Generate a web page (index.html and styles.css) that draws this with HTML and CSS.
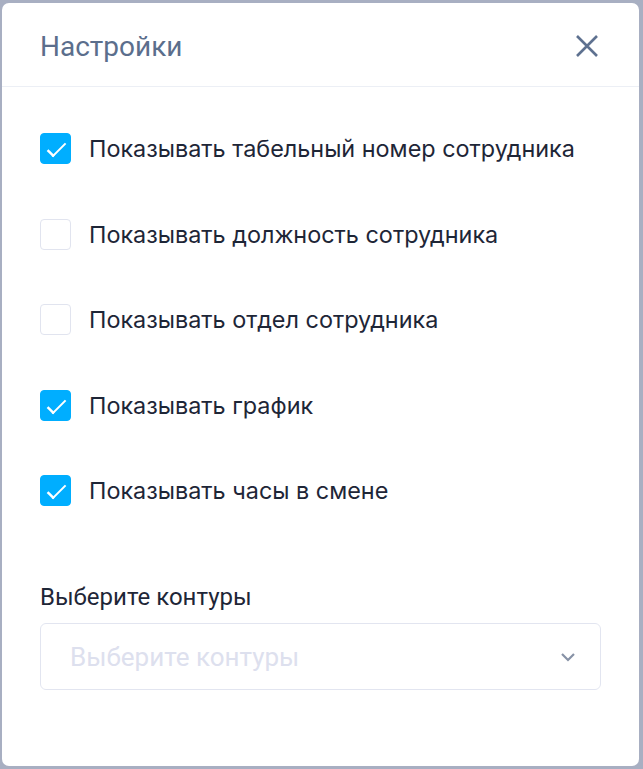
FILE: index.html
```html
<!doctype html>
<html lang="ru">
<head>
    <meta charset="UTF-8">
    <meta name="viewport" content="width=device-width, initial-scale=1.0">
    <title>Настройки</title>
    <link rel="stylesheet" href="styles.css">
</head>
<body>

<div class="modal">
    <div class="modal-head">
        <h2>Настройки</h2>
        <button class="close" type="button">
            <svg width="24" height="24" viewBox="0 0 24 24">
                <path d="M2 2 L22 22 M22 2 L2 22" stroke="#5e7190" stroke-width="2.6" fill="none"/>
            </svg>
        </button>
    </div>

    <div class="modal-body">
        <ul class="checks">
            <li>
                <span class="box on"></span>
                <span class="text">Показывать табельный номер сотрудника</span>
            </li>
            <li>
                <span class="box"></span>
                <span class="text">Показывать должность сотрудника</span>
            </li>
            <li>
                <span class="box"></span>
                <span class="text">Показывать отдел сотрудника</span>
            </li>
            <li>
                <span class="box on"></span>
                <span class="text">Показывать график</span>
            </li>
            <li>
                <span class="box on"></span>
                <span class="text">Показывать часы в смене</span>
            </li>
        </ul>

        <div class="field">
            <label>Выберите контуры</label>
            <div class="select">
                <span class="placeholder">Выберите контуры</span>
                <svg width="16" height="10" viewBox="0 0 16 10">
                    <path d="M2 2 L8 8 L14 2" stroke="#8792a6" stroke-width="2.2" fill="none"/>
                </svg>
            </div>
        </div>
    </div>
</div>

</body>
</html>
```

FILE: styles.css
```css
body{
    margin: 0;
    background-color: #a8afc2;
    font-family: Roboto, "Noto Sans", sans-serif;
}
ul{
    margin: 0;
    padding: 0;
    list-style: none;
}
.modal{
    width: 637px;
    height: 763px;
    margin: 3px 0 0 2px;
    background-color: #fff;
    border-radius: 7px;
    overflow: hidden;
}
.modal-head{
    height: 83px;
    display: flex;
    align-items: center;
    justify-content: space-between;
    padding: 0 40px 0 38px;
    border-bottom: 1px solid #eceff5;
}
.modal-head h2{
    margin: 4px 0 0;
    font-size: 28px;
    font-weight: 400;
    color: #5b6e8c;
}
.close{
    border: none;
    background: none;
    padding: 0;
    width: 24px;
    height: 24px;
    margin-top: 2px;
    cursor: pointer;
}
.modal-body{
    padding: 46px 38px 0;
}
.checks li{
    display: flex;
    align-items: center;
    height: 31px;
    margin-bottom: 54.5px;
}
.checks li:last-child{
    margin-bottom: 0;
}
.box{
    width: 29px;
    height: 29px;
    border: 1px solid #e1e4ef;
    border-radius: 4px;
    box-sizing: content-box;
    margin-right: 18px;
    position: relative;
    flex: none;
}
.box.on{
    background-color: #00aeff;
    border-color: #00aeff;
}
.box.on::after{
    content: "";
    position: absolute;
    left: 8px;
    top: 5px;
    width: 13px;
    height: 7px;
    border-left: 2.5px solid #fff;
    border-bottom: 2.5px solid #fff;
    transform: translate(0, 4px) rotate(-45deg) scaleX(1.25);
    transform-origin: center;
}
.text{
    font-family: Inter, "Noto Sans", sans-serif;
    font-size: 23.4px;
    color: #1e2637;
    white-space: nowrap;
}
.field{
    margin-top: 77px;
}
.field label{
    display: block;
    font-size: 24px;
    line-height: 28px;
    color: #1e2637;
    margin-bottom: 12px;
}
.select{
    height: 65px;
    border: 1px solid #e2e5f0;
    border-radius: 6px;
    display: flex;
    align-items: center;
    justify-content: space-between;
    padding: 0 24px 0 29px;
}
.placeholder{
    font-size: 26px;
    color: #dde0ee;
}
```
